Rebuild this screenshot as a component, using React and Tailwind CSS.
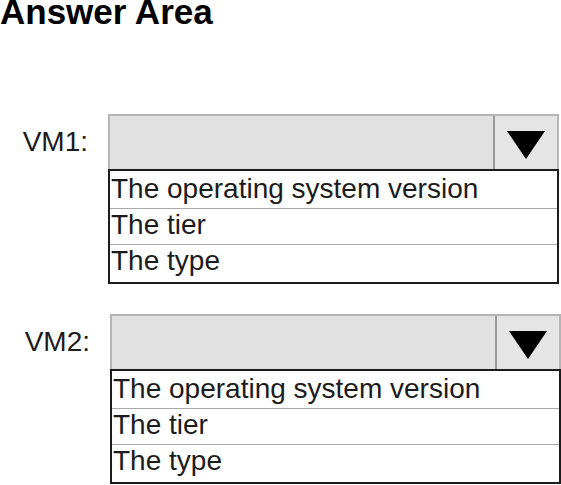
import { useState } from "react";

const OPTIONS = ["The operating system version", "The tier", "The type"];

function AnswerRow({ id, label, className }) {
  const [value, setValue] = useState("");

  return (
    <div className={`flex items-start ${className}`}>
      <label
        htmlFor={id}
        className="w-[108px] shrink-0 pr-5 text-right leading-[55px]"
      >
        {label}
      </label>
      <div className="min-w-0 flex-1">
        <div className="grid h-[55px] border-2 border-b-0 border-[#b5b5b5] bg-[#e1e1e1]">
          <select
            id={id}
            value={value}
            onChange={(event) => setValue(event.target.value)}
            className="col-start-1 row-start-1 w-full appearance-none bg-transparent pl-1 pr-16 outline-none"
          >
            <option value="" />
            {OPTIONS.map((option) => (
              <option key={option}>{option}</option>
            ))}
          </select>
          <span className="pointer-events-none col-start-1 row-start-1 flex w-16 items-center justify-center justify-self-end border-l-2 border-[#999999] bg-[#e5e5e5]">
            <svg viewBox="0 0 38 28" className="mt-1 h-7 w-[38px]" aria-hidden="true">
              <path d="M0 0H38L19 28Z" fill="#000" />
            </svg>
          </span>
        </div>
        <ul className="border-2 border-[#1c1c1c] bg-white pt-[2px] pb-px">
          {OPTIONS.map((option) => (
            <li
              key={option}
              className="h-9 whitespace-nowrap border-b border-[#aaaaaa] pl-px leading-8 last:border-b-0"
            >
              {option}
            </li>
          ))}
        </ul>
      </div>
    </div>
  );
}

export default function App() {
  return (
    <main className="bg-white font-['Liberation_Sans',Arial,sans-serif] text-[28px] text-[#1c1c1c]">
      <h1 className="text-[35px] font-bold leading-6 text-black">Answer Area</h1>
      <div className="mt-[90px] flex flex-col gap-[30px]">
        <AnswerRow id="vm1" label="VM1:" className="pr-[2px]" />
        <AnswerRow id="vm2" label="VM2:" className="pl-[2px]" />
      </div>
    </main>
  );
}
